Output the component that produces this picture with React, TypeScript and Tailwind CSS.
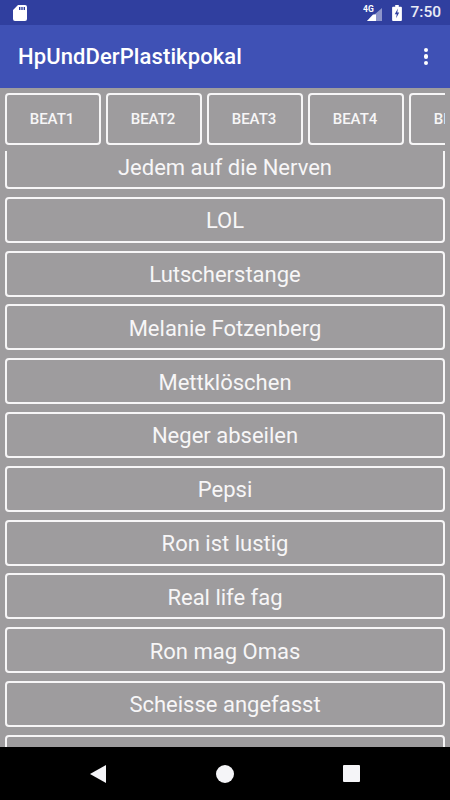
const beats = ["BEAT1", "BEAT2", "BEAT3", "BEAT4", "BEAT5"];

const sounds = [
  "Jedem auf die Nerven",
  "LOL",
  "Lutscherstange",
  "Melanie Fotzenberg",
  "Mettklöschen",
  "Neger abseilen",
  "Pepsi",
  "Ron ist lustig",
  "Real life fag",
  "Ron mag Omas",
  "Scheisse angefasst",
  "",
];

function StatusBar() {
  return (
    <div className="flex h-[25px] shrink-0 items-center justify-between bg-[#303f9f] pr-[9px] pl-[13px]">
      <svg width="14" height="16" viewBox="0 0 14 16" className="fill-white">
        <path d="M5 0h7a2 2 0 0 1 2 2v12a2 2 0 0 1-2 2H2a2 2 0 0 1-2-2V5zM6 2v3h1.400V2zM8.300 2v3h1.400V2zM10.600 2v3H12V2z" fillRule="evenodd" />
      </svg>
      <div className="flex items-center">
        <svg width="20" height="18" viewBox="0 0 20 18" className="mr-[9px] fill-white">
          <path d="M19 4v13H4z" opacity="0.45" />
          <path d="M13 10.500V17H4l6-6.500z" />
          <text x="0" y="8" fontSize="8.500" fontWeight="700" className="font-['Roboto',sans-serif]">4G</text>
        </svg>
        <svg width="10" height="16" viewBox="0 0 11 18" className="mr-[8px]">
          <path d="M3.500 0h4v2H10a1 1 0 0 1 1 1v14a1 1 0 0 1-1 1H1a1 1 0 0 1-1-1V3a1 1 0 0 1 1-1h2.500z" fill="#fff" />
          <path d="M6.500 4 3 10.500h2.200L4.500 15 8 8.500H5.800z" fill="#303f9f" />
        </svg>
        <span className="text-[15.500px] font-medium text-white/90">7:50</span>
      </div>
    </div>
  );
}

function AppBar() {
  return (
    <div className="flex h-[63px] shrink-0 items-center justify-between bg-[#3f51b5] pr-[22px] pl-[18px]">
      <h1 className="text-[22px] font-medium tracking-[0.1px] text-white">HpUndDerPlastikpokal</h1>
      <div className="flex flex-col gap-[2px]">
        <span className="size-[4.500px] rounded-full bg-white" />
        <span className="size-[4.500px] rounded-full bg-white" />
        <span className="size-[4.500px] rounded-full bg-white" />
      </div>
    </div>
  );
}

function NavBar() {
  return (
    <div className="flex h-[53px] shrink-0 items-center justify-between bg-black pr-[90px] pl-[90px]">
      <svg width="16" height="18" viewBox="0 0 16 18" className="fill-[#f5f5f8]">
        <path d="M16 0v18L0 9z" />
      </svg>
      <span className="size-[18px] rounded-full bg-[#f5f5f8]" />
      <span className="size-[17px] rounded-[1px] bg-[#f5f5f8]" />
    </div>
  );
}

export default function App() {
  return (
    <div className="flex h-[800px] w-[450px] flex-col overflow-hidden bg-[#9e9c9e] font-['Roboto',sans-serif] text-[#f7f6f7]">
      <StatusBar />
      <AppBar />

      <div className="mx-[5px] flex h-[63px] shrink-0 gap-[5px] overflow-hidden pt-[5px]">
        {beats.map((beat) => (
          <button
            key={beat}
            className="h-[52px] w-[96px] shrink-0 rounded-[4px] border-2 border-[#f7f6f7] pr-[2px] text-[15px] font-medium"
          >
            {beat}
          </button>
        ))}
      </div>

      <div className="min-h-0 flex-1 overflow-hidden">
        <div className="-mt-[8px] flex flex-col gap-[7.800px] px-[5px]">
          {sounds.map((sound, i) => (
            <button
              key={i}
              className="h-[46px] w-full shrink-0 rounded-[4px] border-2 border-[#f7f6f7] pt-[2px] text-[22px]"
            >
              {sound}
            </button>
          ))}
        </div>
      </div>

      <NavBar />
    </div>
  );
}
